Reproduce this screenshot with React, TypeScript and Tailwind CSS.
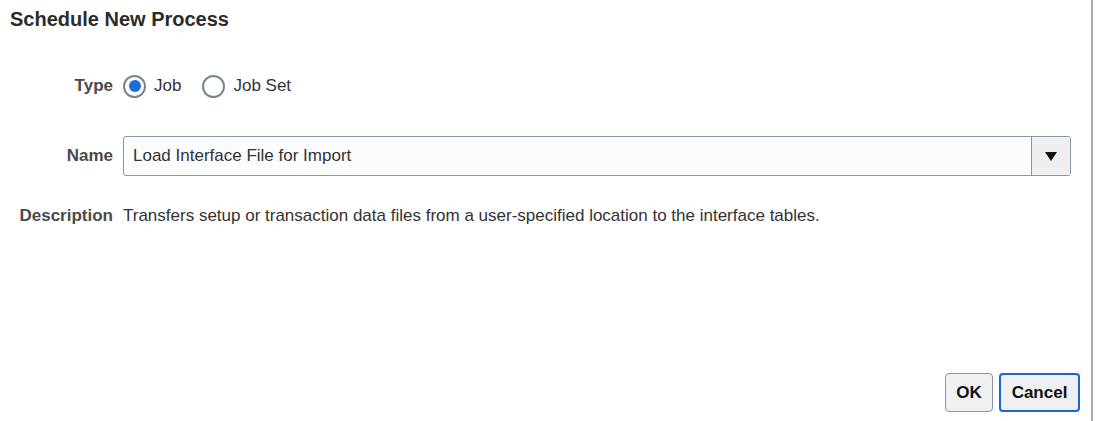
import React from 'react';

export default function App() {
  return (
    <div
      className="relative flex h-[421px] w-[1096px] flex-col bg-white text-[#333]"
      style={{ fontFamily: '"Liberation Sans", Arial, sans-serif' }}
    >
      <div className="absolute right-[3px] top-0 h-full w-[2px] bg-[#a3adb8]" />
      <h1 className="ml-[10px] mt-[8px] h-[22px] text-[20px] font-bold leading-[22px] text-[#2b2b2b]">
        Schedule New Process
      </h1>

      <div className="mt-[45px] flex h-[22px] items-center">
        <div className="w-[113px] text-right text-[17px] font-bold leading-[22px] text-[#4a4a4a]">Type</div>
        <label className="ml-[10px] flex items-center">
          <span className="flex h-[23px] w-[23px] items-center justify-center rounded-full border-2 border-[#7a8590] bg-white">
            <span className="h-[12px] w-[12px] rounded-full bg-[#1b6fd4]" />
          </span>
          <span className="ml-[8px] text-[17px] leading-[22px]">Job</span>
        </label>
        <label className="ml-[21px] flex items-center">
          <span className="h-[23px] w-[23px] rounded-full border-2 border-[#7a8590] bg-white" />
          <span className="ml-[8px] text-[17px] leading-[22px]">Job Set</span>
        </label>
      </div>

      <div className="mt-[39px] flex items-center">
        <div className="w-[113px] text-right text-[17px] font-bold text-[#4a4a4a]">Name</div>
        <div className="ml-[10px] flex h-[40px] w-[948px] overflow-hidden rounded-[3px] border border-[#8a96a2] bg-[#fbfcfd]">
          <div className="flex flex-1 items-center pl-[9px] text-[17px] text-[#333]">
            Load Interface File for Import
          </div>
          <div className="flex w-[39px] items-center justify-center border-l border-[#8a96a2] bg-[#eeeff0]">
            <svg width="12" height="9" viewBox="0 0 12 9">
              <path d="M0 0 L12 0 L6 9 Z" fill="#111" />
            </svg>
          </div>
        </div>
      </div>

      <div className="mt-[29px] flex h-[22px] items-center">
        <div className="w-[113px] text-right text-[17px] font-bold leading-[22px] text-[#4a4a4a]">Description</div>
        <div className="ml-[10px] text-[17px] leading-[22px] text-[#333]">
          Transfers setup or transaction data files from a user-specified location to the interface tables.
        </div>
      </div>

      <div className="mt-auto mb-[9px] mr-[16px] flex justify-end gap-[6px]">
        <button
          type="button"
          className="h-[39px] w-[48px] rounded-[4px] border border-[#8a96a2] bg-[#eef0f2] text-[17px] font-bold text-[#111]"
        >
          OK
        </button>
        <button
          type="button"
          className="h-[39px] w-[81px] rounded-[4px] border-2 border-[#1b66c9] bg-[#eef0f2] text-[17px] font-bold text-[#111]"
        >
          Cancel
        </button>
      </div>
    </div>
  );
}
